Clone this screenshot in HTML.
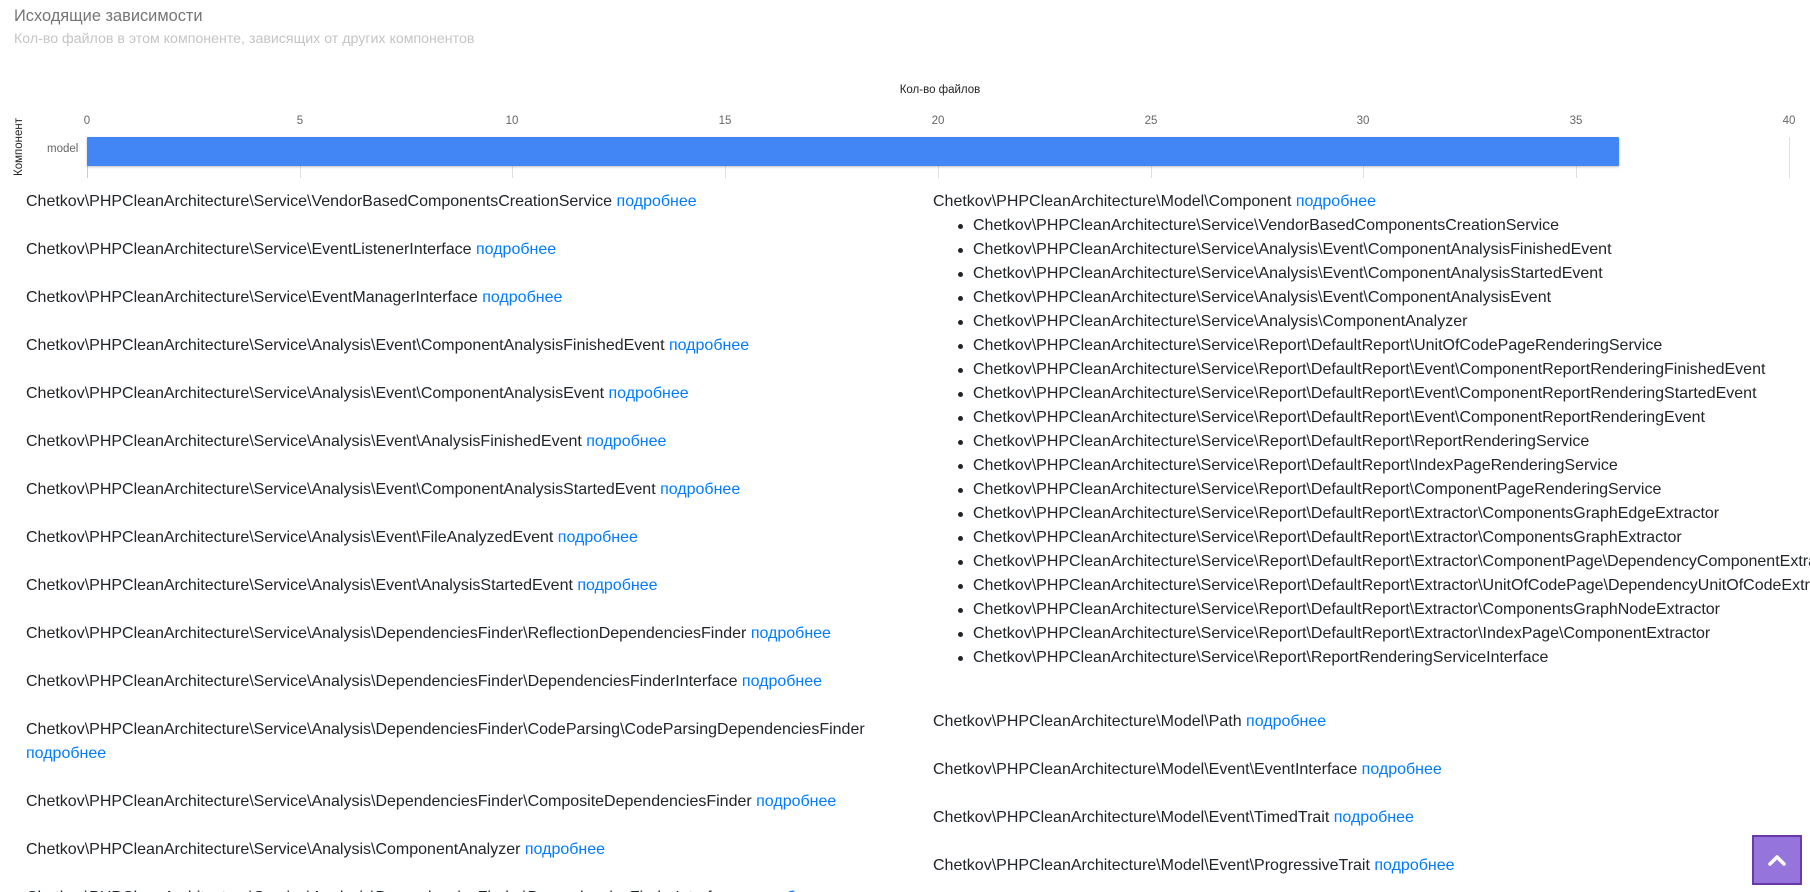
<!DOCTYPE html>
<html><head><meta charset="utf-8"><style>
html,body{margin:0;padding:0;width:1810px;height:892px;overflow:hidden;background:#fff;}
body{font-family:"Liberation Sans",sans-serif;position:relative;}
.abs{position:absolute;white-space:nowrap;}
.t{font-size:16px;color:#212529;line-height:24px;}
a{color:#007bff;text-decoration:none;}
.tick{position:absolute;top:115px;font-size:11.5px;color:#666;transform:translateX(-50%);}
.gl{position:absolute;top:137px;height:41px;width:1px;background:#e0e0e0;}
ul{margin:0;padding:0;list-style:none;}
li{position:relative;}
li:before{content:"";position:absolute;left:-15px;top:10px;width:5px;height:5px;border-radius:50%;background:#212529;}
</style></head><body>
<div class="abs" style="left:14px;top:7px;font-size:16.4px;color:#757575;">Исходящие зависимости</div>
<div class="abs" style="left:14px;top:31px;font-size:14.2px;color:#c4c4c4;">Кол-во файлов в этом компоненте, зависящих от других компонентов</div>

<div class="abs" style="left:940px;top:84px;font-size:11.5px;color:#222;transform:translateX(-50%);">Кол-во файлов</div>
<div class="gl" style="left:87px;background:#ccc"></div>
<div class="gl" style="left:300px"></div><div class="gl" style="left:512px"></div><div class="gl" style="left:725px"></div><div class="gl" style="left:938px"></div><div class="gl" style="left:1151px"></div><div class="gl" style="left:1363px"></div><div class="gl" style="left:1576px"></div><div class="gl" style="left:1789px"></div>
<div class="tick" style="left:87px">0</div><div class="tick" style="left:300px">5</div><div class="tick" style="left:512px">10</div><div class="tick" style="left:725px">15</div><div class="tick" style="left:938px">20</div><div class="tick" style="left:1151px">25</div><div class="tick" style="left:1363px">30</div><div class="tick" style="left:1576px">35</div><div class="tick" style="left:1789px">40</div>
<div class="abs" style="left:87px;top:137px;width:1532px;height:29px;background:#4285f4;border-radius:1px;box-shadow:0 1px 2px rgba(0,0,0,.25);"></div>
<div class="abs" style="left:47px;top:143px;font-size:11.5px;color:#666;">model</div>
<div class="abs" style="left:-10px;top:141px;font-size:11.5px;color:#222;transform:rotate(-90deg);transform-origin:center;">Компонент</div>

<div class="abs t" style="left:26px;top:190px;width:870px;white-space:normal;">
<div style="margin-bottom:24px">Chetkov\PHPCleanArchitecture\Service\VendorBasedComponentsCreationService <a>подробнее</a></div>
<div style="margin-bottom:24px">Chetkov\PHPCleanArchitecture\Service\EventListenerInterface <a>подробнее</a></div>
<div style="margin-bottom:24px">Chetkov\PHPCleanArchitecture\Service\EventManagerInterface <a>подробнее</a></div>
<div style="margin-bottom:24px">Chetkov\PHPCleanArchitecture\Service\Analysis\Event\ComponentAnalysisFinishedEvent <a>подробнее</a></div>
<div style="margin-bottom:24px">Chetkov\PHPCleanArchitecture\Service\Analysis\Event\ComponentAnalysisEvent <a>подробнее</a></div>
<div style="margin-bottom:24px">Chetkov\PHPCleanArchitecture\Service\Analysis\Event\AnalysisFinishedEvent <a>подробнее</a></div>
<div style="margin-bottom:24px">Chetkov\PHPCleanArchitecture\Service\Analysis\Event\ComponentAnalysisStartedEvent <a>подробнее</a></div>
<div style="margin-bottom:24px">Chetkov\PHPCleanArchitecture\Service\Analysis\Event\FileAnalyzedEvent <a>подробнее</a></div>
<div style="margin-bottom:24px">Chetkov\PHPCleanArchitecture\Service\Analysis\Event\AnalysisStartedEvent <a>подробнее</a></div>
<div style="margin-bottom:24px">Chetkov\PHPCleanArchitecture\Service\Analysis\DependenciesFinder\ReflectionDependenciesFinder <a>подробнее</a></div>
<div style="margin-bottom:24px">Chetkov\PHPCleanArchitecture\Service\Analysis\DependenciesFinder\DependenciesFinderInterface <a>подробнее</a></div>
<div style="margin-bottom:24px;white-space:nowrap">Chetkov\PHPCleanArchitecture\Service\Analysis\DependenciesFinder\CodeParsing\CodeParsingDependenciesFinder<br><a>подробнее</a></div>
<div style="margin-bottom:24px">Chetkov\PHPCleanArchitecture\Service\Analysis\DependenciesFinder\CompositeDependenciesFinder <a>подробнее</a></div>
<div style="margin-bottom:24px">Chetkov\PHPCleanArchitecture\Service\Analysis\ComponentAnalyzer <a>подробнее</a></div>
<div style="margin-bottom:24px">Chetkov\PHPCleanArchitecture\Service\Analysis\DependenciesFinder\DependenciesFinderInterface <a>подробнее</a></div>
</div>

<div class="abs t" style="left:933px;top:190px;">
<div>Chetkov\PHPCleanArchitecture\Model\Component <a>подробнее</a></div>
<ul style="margin-left:40px;margin-bottom:40px">
<li>Chetkov\PHPCleanArchitecture\Service\VendorBasedComponentsCreationService</li>
<li>Chetkov\PHPCleanArchitecture\Service\Analysis\Event\ComponentAnalysisFinishedEvent</li>
<li>Chetkov\PHPCleanArchitecture\Service\Analysis\Event\ComponentAnalysisStartedEvent</li>
<li>Chetkov\PHPCleanArchitecture\Service\Analysis\Event\ComponentAnalysisEvent</li>
<li>Chetkov\PHPCleanArchitecture\Service\Analysis\ComponentAnalyzer</li>
<li>Chetkov\PHPCleanArchitecture\Service\Report\DefaultReport\UnitOfCodePageRenderingService</li>
<li>Chetkov\PHPCleanArchitecture\Service\Report\DefaultReport\Event\ComponentReportRenderingFinishedEvent</li>
<li>Chetkov\PHPCleanArchitecture\Service\Report\DefaultReport\Event\ComponentReportRenderingStartedEvent</li>
<li>Chetkov\PHPCleanArchitecture\Service\Report\DefaultReport\Event\ComponentReportRenderingEvent</li>
<li>Chetkov\PHPCleanArchitecture\Service\Report\DefaultReport\ReportRenderingService</li>
<li>Chetkov\PHPCleanArchitecture\Service\Report\DefaultReport\IndexPageRenderingService</li>
<li>Chetkov\PHPCleanArchitecture\Service\Report\DefaultReport\ComponentPageRenderingService</li>
<li>Chetkov\PHPCleanArchitecture\Service\Report\DefaultReport\Extractor\ComponentsGraphEdgeExtractor</li>
<li>Chetkov\PHPCleanArchitecture\Service\Report\DefaultReport\Extractor\ComponentsGraphExtractor</li>
<li>Chetkov\PHPCleanArchitecture\Service\Report\DefaultReport\Extractor\ComponentPage\DependencyComponentExtractor</li>
<li>Chetkov\PHPCleanArchitecture\Service\Report\DefaultReport\Extractor\UnitOfCodePage\DependencyUnitOfCodeExtractor</li>
<li>Chetkov\PHPCleanArchitecture\Service\Report\DefaultReport\Extractor\ComponentsGraphNodeExtractor</li>
<li>Chetkov\PHPCleanArchitecture\Service\Report\DefaultReport\Extractor\IndexPage\ComponentExtractor</li>
<li>Chetkov\PHPCleanArchitecture\Service\Report\ReportRenderingServiceInterface</li>
</ul>
<div style="margin-bottom:24px">Chetkov\PHPCleanArchitecture\Model\Path <a>подробнее</a></div>
<div style="margin-bottom:24px">Chetkov\PHPCleanArchitecture\Model\Event\EventInterface <a>подробнее</a></div>
<div style="margin-bottom:24px">Chetkov\PHPCleanArchitecture\Model\Event\TimedTrait <a>подробнее</a></div>
<div style="margin-bottom:24px">Chetkov\PHPCleanArchitecture\Model\Event\ProgressiveTrait <a>подробнее</a></div>
</div>

<div class="abs" style="left:1752px;top:835px;width:46px;height:46px;background:#9575db;border:2px solid #6a3aa8;">
<svg width="46" height="46" viewBox="0 0 46 46"><path d="M16 27 L23 20 L30 27" fill="none" stroke="#fff" stroke-width="3.5" stroke-linecap="round" stroke-linejoin="round"/></svg>
</div>
</body></html>
